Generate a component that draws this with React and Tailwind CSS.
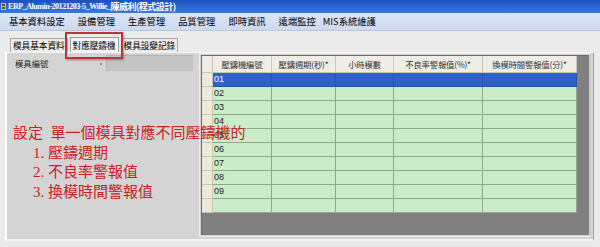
import React from "react";

const menus = ["基本資料設定", "設備管理", "生產管理", "品質管理", "即時資訊", "遠端監控", "MIS系統維護"];
const tabs = ["模具基本資料", "對應壓鑄機", "模具設變記錄"];
const columns = ["壓鑄機編號", "壓鑄週期(秒)*", "小時模數", "不良率警報值(%)*", "換模時間警報值(分)*"];
const rows = ["01", "02", "03", "04", "05", "06", "07", "08", "09", ""];

const App = () => {
  return (
    <div className="relative w-[600px] h-[247px] overflow-hidden bg-[#ebebeb] font-['Noto_Sans_CJK_TC',sans-serif] text-black">
      {/* 標題列 */}
      <div className="h-[13px] flex items-center bg-gradient-to-b from-[#1c4fc0] to-[#3b78de] pl-[1px]">
        <svg width="6" height="9" viewBox="0 0 6 9" className="mr-[1px]">
          <rect x="0" y="1" width="5" height="7" fill="#d9c27a" />
          <rect x="1" y="2" width="3" height="2" fill="#7a3d1a" />
          <rect x="1" y="5" width="3" height="2" fill="#2c6a2a" />
        </svg>
        <span className="text-white font-bold text-[8px] leading-none tracking-[-0.45px] font-['Liberation_Serif','Noto_Sans_CJK_TC',serif]">
          ERP_Alumin-20121203-5_Willie_
        </span>
        <span className="text-white font-bold text-[9px] leading-none tracking-[-0.5px]">陳威利(程式設計)</span>
      </div>

      {/* 選單列 */}
      <div className="h-[18px] flex items-center gap-[13px] pl-[9px] bg-gradient-to-b from-[#dde5f4] to-[#cdd9ef] border-b border-[#b9c6e0] text-[9.3px] leading-none">
        {menus.map((m) => (
          <span key={m} className={m.startsWith("MIS") ? "ml-[-6px]" : ""}>
            {m}
          </span>
        ))}
      </div>

      {/* 頁籤 */}
      <div className="mt-[6px] ml-[10px] h-[15px] flex items-end text-[8.6px] leading-none">
        {tabs.map((t, i) => (
          <div
            key={t}
            className={
              i === 1
                ? "h-[15px] px-[2px] flex items-center bg-[#f4f4f4] border border-b-0 border-[#9a9a9a] mx-[2px]"
                : "h-[14px] px-[2px] flex items-center bg-[#ededed] border border-b-0 border-[#a8a8a8]"
            }
          >
            {t}
          </div>
        ))}
      </div>

      {/* 內容面板 */}
      <div className="ml-[5px] w-[589px] h-[189px] flex bg-[#d4d4d4] border-l-2 border-t border-l-white border-t-[#f6f6f6] border-r border-b-2 border-r-[#a0a0a0] border-b-[#f2f2f2]">
        <div className="w-[192px] flex items-start pt-[2px]">
          <span className="ml-[8px] mt-[4px] text-[8.4px] leading-none text-[#222]">模具編號</span>
          <span className="ml-[51px] mt-[8px] w-[2px] h-[2px] bg-[#8a8a8a]" />
          <div className="ml-[4px] w-[87px] h-[16px] bg-[#c4c4c4] border-t border-l border-[#b4b4b4]" />
        </div>

        <div className="flex-1 mr-[2px] mb-[2px] p-[1px] border border-[#eeeeee] border-r-[#c8c8c8]">
          <div className="h-full bg-[#808080] border-l border-t border-[#6a6a6a]">
            <div className="w-[375px]">
              <div className="grid grid-cols-[11px_59px_64px_58px_89px_94px] h-[17px] bg-[#efede4] text-[8.4px] leading-none text-[#333]">
                <div className="border-r border-b border-[#c9c6b6]" />
                {columns.map((c) => (
                  <div key={c} className="flex items-center justify-center border-r border-b border-[#c9c6b6] tracking-[-0.2px]">
                    {c}
                  </div>
                ))}
              </div>
              {rows.map((r, i) => (
                <div key={i} className="grid grid-cols-[11px_59px_64px_58px_89px_94px] h-[14px] font-['Liberation_Sans',sans-serif] text-[9px] leading-none">
                  <div className="bg-[#ece9d8] border-r border-b border-[#c9c6b6]" />
                  {[0, 1, 2, 3, 4].map((c) => (
                    <div
                      key={c}
                      className={
                        i === 0
                          ? "bg-[#2f62c8] text-white border-r border-b border-[#2752a8] flex items-center pl-[1px]"
                          : "bg-[#c9ecc9] text-[#222] border-r border-b border-[#8fa78f] flex items-center pl-[1px]"
                      }
                    >
                      {c === 0 ? r : ""}
                    </div>
                  ))}
                </div>
              ))}
            </div>
          </div>
        </div>
      </div>

      {/* 紅框標註 */}
      <div className="absolute left-[65px] top-[32px] w-[58px] h-[27px] border-2 border-[#b8333a] shadow-[1px_1px_2px_rgba(0,0,0,0.35)]" />

      {/* 說明文字 */}
      <div className="absolute left-[13px] top-[124px] text-[15px] leading-[19.5px] text-[#cc2020] font-['Liberation_Serif','Noto_Sans_CJK_TC',serif]">
        <div>設定&nbsp;&nbsp;單一個模具對應不同壓鑄機的</div>
        <div className="pl-[20px]">1. 壓鑄週期</div>
        <div className="pl-[20px]">2. 不良率警報值</div>
        <div className="pl-[20px]">3. 換模時間警報值</div>
      </div>
    </div>
  );
};

export default App;
